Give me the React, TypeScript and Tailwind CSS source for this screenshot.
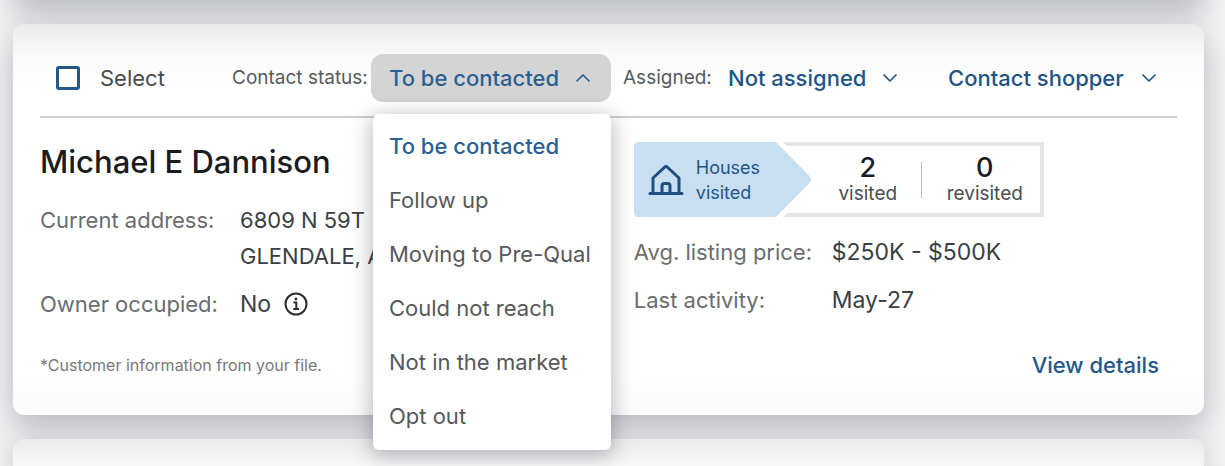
import React, { useState } from 'react';
import { ChevronDown, ChevronUp } from 'lucide-react';

const statuses = [
  'To be contacted',
  'Follow up',
  'Moving to Pre-Qual',
  'Could not reach',
  'Not in the market',
  'Opt out',
];

const cardShadow = 'shadow-[0_12px_32px_2px_rgba(70,72,88,0.34)]';

const HouseIcon: React.FC = () => (
  <svg width="36" height="32" viewBox="0 0 36 32" fill="none" stroke="#1d4f80" strokeWidth="3" strokeLinecap="round" strokeLinejoin="round" aria-hidden="true">
    <path d="M2 29.5H34" />
    <path d="M5 29V14L16.800 3Q18 2 19.200 3L31 14V29" />
    <path d="M14 29V22Q14 19.500 16.500 19.500H19.500Q22 19.500 22 22V29" />
  </svg>
);

const InfoIcon: React.FC = () => (
  <svg width="24" height="24" viewBox="0 0 24 24" fill="none" stroke="#2a2c30" strokeWidth="2" aria-hidden="true">
    <circle cx="12" cy="12" r="10.500" />
    <path d="M9.500 10.500H12.300V17M9.300 17H15" />
    <circle cx="12" cy="7" r="1.400" fill="#2a2c30" stroke="none" />
  </svg>
);

const StatusPicker: React.FC = () => {
  const [open, setOpen] = useState(true);
  const [status, setStatus] = useState(statuses[0]);
  const Chevron = open ? ChevronUp : ChevronDown;

  return (
    <div className="relative">
      <button
        type="button"
        aria-haspopup="listbox"
        aria-expanded={open}
        aria-labelledby="status-label"
        onClick={() => setOpen(!open)}
        className="flex h-12 w-60 items-center justify-between rounded-xl bg-[#d4d4d4] pr-4 pl-[18px] font-medium text-[#2b5f93]"
      >
        {status}
        <Chevron size={24} strokeWidth={1.75} />
      </button>
      {open && (
        <ul
          role="listbox"
          aria-labelledby="status-label"
          className="absolute top-[60px] right-0 left-[2px] z-10 rounded-md bg-white pt-[5px] pb-[7px] shadow-[0_4px_20px_2px_rgba(60,62,80,0.35)]"
        >
          {statuses.map((item) => (
            <li key={item} role="option" aria-selected={item === status}>
              <button
                type="button"
                onClick={() => setStatus(item)}
                className={`block h-[54px] w-full px-4 text-left whitespace-nowrap ${item === status ? 'font-medium text-[#2b5f93]' : 'text-[#57585a]'}`}
              >
                {item}
              </button>
            </li>
          ))}
        </ul>
      )}
    </div>
  );
};

const HousesVisited: React.FC = () => (
  <div className="relative flex h-[75px] w-[410px]">
    <div className="relative z-[1] flex w-[178px] items-center gap-3 pl-[14px]">
      <svg className="absolute top-0 left-0" width="190" height="75" viewBox="0 0 190 75" aria-hidden="true">
        <path d="M0 0H149L187 37.500L149 75H0Z" fill="#fff" />
        <path d="M5 0H142L175.500 34Q178.500 37.500 175.500 41L142 75H5Q0 75 0 70V5Q0 0 5 0Z" fill="#c8dff3" />
      </svg>
      <div className="relative"><HouseIcon /></div>
      <p className="relative text-lg leading-[25px] text-[#1f5485]">Houses<br />visited</p>
    </div>
    <div className="-ml-12 flex flex-1 items-center border-4 border-[#e5e5e5] pl-[47px] text-center">
      <div className="w-[106px]">
        <p className="text-[27px] leading-7 font-medium text-[#1b1c1f]">2</p>
        <p className="text-[19px] leading-6 text-[#4b4d50]">visited</p>
      </div>
      <div className="h-9 w-px bg-[#bdbdbd]" />
      <div className="flex-1 pl-2">
        <p className="text-[27px] leading-7 font-medium text-[#1b1c1f]">0</p>
        <p className="text-[19px] leading-6 text-[#4b4d50]">revisited</p>
      </div>
    </div>
  </div>
);

const ShopperCard: React.FC = () => (
  <article className={`rounded-xl bg-[linear-gradient(to_bottom,#ebebeb_0,#fafafa_32px,#ffffff_64px,#ffffff_350px,#fbfbfb_100%)] px-[27px] pt-[30px] pb-9 ${cardShadow}`}>
    <header className="flex items-center border-b-2 border-[#cdcdcd] pb-[14px] text-[22px] whitespace-nowrap">
      <label className="flex w-[192px] items-center gap-5 pl-4 text-[#4a4b4e]">
        <input type="checkbox" className="h-6 w-6 appearance-none rounded-[3px] border-[3px] border-[#245789] bg-white checked:bg-[#245789]" />
        Select
      </label>
      <span id="status-label" className="w-[139px] text-[19px] text-[#58595b]">Contact status:</span>
      <StatusPicker />
      <label htmlFor="assigned" className="ml-3 w-[105px] text-[19px] text-[#58595b]">Assigned:</label>
      <div className="relative">
        <select id="assigned" className="w-[174px] appearance-none bg-transparent font-medium text-[#1f5485]">
          <option>Not assigned</option>
        </select>
        <ChevronDown size={24} strokeWidth={1.75} className="pointer-events-none absolute top-1 right-0 text-[#1f5485]" />
      </div>
      <button type="button" className="mr-4 ml-auto flex w-[213px] items-center justify-between font-medium text-[#1f5485]">
        Contact shopper
        <ChevronDown size={24} strokeWidth={1.75} />
      </button>
    </header>

    <div className="grid grid-cols-[47fr_43fr] pt-6">
      <div className="pt-[2px]">
        <h2 className="mb-[22px] text-[31px] leading-9 font-medium text-[#1b1c1f]">Michael E Dannison</h2>
        <dl className="grid grid-cols-[200px_1fr] gap-y-3 leading-9">
          <dt className="text-[22px] text-[#6a6c6e]">Current address:</dt>
          <dd className="text-[22px] text-[#3b3e43]">6809 N 59T<br />GLENDALE, A</dd>
          <dt className="text-[22px] text-[#6a6c6e]">Owner occupied:</dt>
          <dd className="flex items-center gap-[13px] text-[23px] text-[#3b3e43]">No <InfoIcon /></dd>
        </dl>
      </div>
      <div>
        <HousesVisited />
        <dl className="mt-[17px] grid grid-cols-[198px_1fr] gap-y-3 leading-9">
          <dt className="text-[22px] text-[#6a6c6e]">Avg. listing price:</dt>
          <dd className="text-[23px] text-[#3b3e43]">$250K - $500K</dd>
          <dt className="text-[22px] text-[#6a6c6e]">Last activity:</dt>
          <dd className="text-[23px] text-[#3b3e43]">May-27</dd>
        </dl>
      </div>
    </div>

    <footer className="flex items-center justify-between pt-[29px] pr-[18px]">
      <p className="text-base text-[#77787a]">*Customer information from your file.</p>
      <a href="#details" className="text-[22px] leading-7 font-medium text-[#245789]">View details</a>
    </footer>
  </article>
);

export default function App() {
  return (
    <main className="flex min-h-screen flex-col gap-6 overflow-hidden bg-[#f6f6f7] pr-[21px] pl-[13px] font-[Inter,'Liberation_Sans',sans-serif]">
      <div className={`-mt-20 h-20 shrink-0 rounded-xl bg-white ${cardShadow}`} />
      <ShopperCard />
      <div className={`min-h-6 flex-1 rounded-t-xl bg-[linear-gradient(to_bottom,#ebebeb_0,#fafafa_32px,#ffffff_64px)] ${cardShadow}`} />
    </main>
  );
}
